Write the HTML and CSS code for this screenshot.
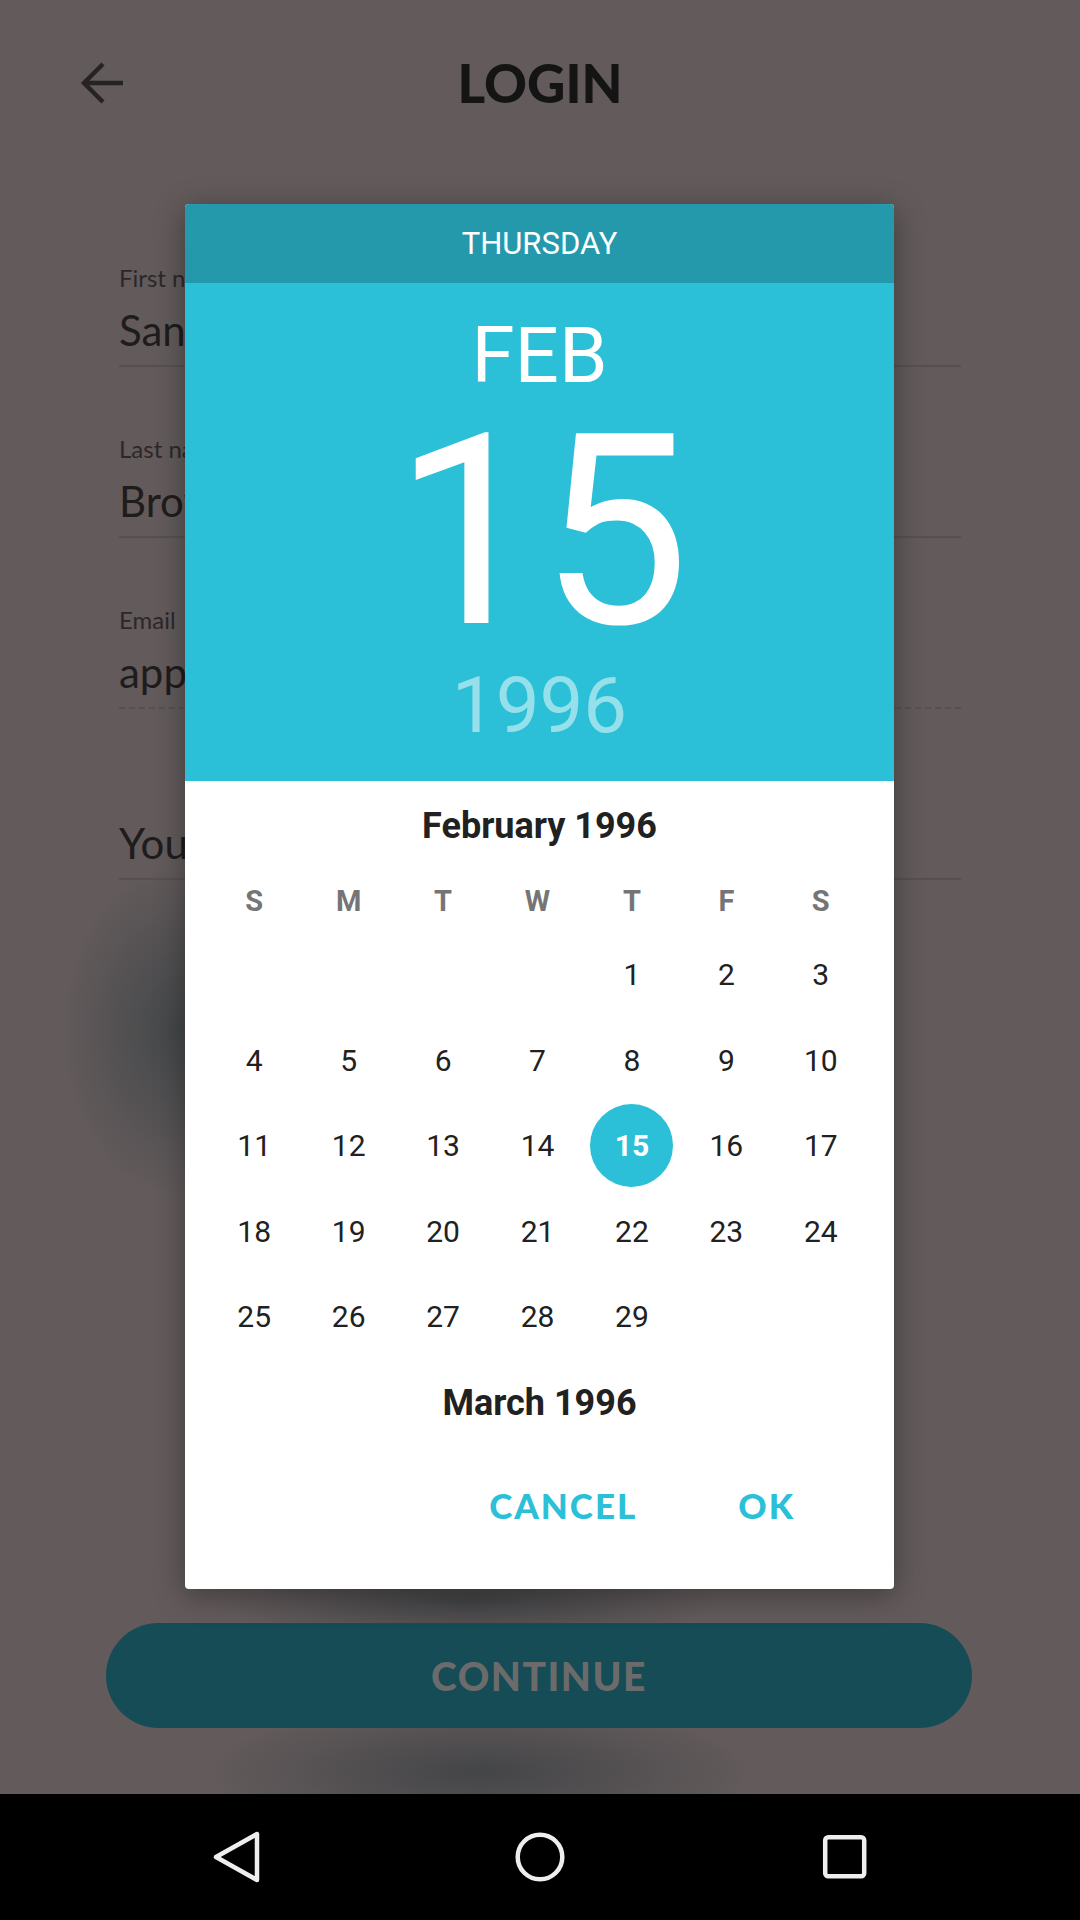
FILE: index.html
```html
<!DOCTYPE html>
<html lang="en">
<head>
<meta charset="utf-8">
<title>Login - Date picker</title>
<link rel="stylesheet" href="styles.css">
</head>
<body>
<div class="phone">
  <div class="screen">
    <header class="topbar">
      <div class="back">
        <svg width="48" height="48" viewBox="0 0 48 48" fill="none" stroke="#262323" stroke-width="4.4" stroke-linecap="butt" stroke-linejoin="miter">
          <path d="M5 24 H44"/>
          <path d="M24 5 L5 24 L24 43"/>
        </svg>
      </div>
      <h1 class="title">LOGIN</h1>
      <div class="spacer"></div>
    </header>

    <form class="form">
      <div class="field">
        <div class="label">First name</div>
        <div class="value">Sandra</div>
      </div>
      <div class="field">
        <div class="label">Last name</div>
        <div class="value">Brown</div>
      </div>
      <div class="field dashed">
        <div class="label">Email</div>
        <div class="value">app@me.io</div>
      </div>
      <div class="field">
        <div class="label hidden">Birthday</div>
        <div class="value">Your birthday</div>
      </div>
    </form>

    <div class="continue">CONTINUE</div>
  </div>

  <nav class="navbar">
    <svg class="nav-icon" width="60" height="60" viewBox="0 0 60 60" fill="none" stroke="#eeeeee" stroke-width="4.5" stroke-linejoin="round">
      <path d="M10 30 L51 7 L51 53 Z"/>
    </svg>
    <svg class="nav-icon" width="60" height="60" viewBox="0 0 60 60" fill="none" stroke="#eeeeee" stroke-width="4.5">
      <circle cx="30" cy="30" r="22.3"/>
    </svg>
    <svg class="nav-icon" width="60" height="60" viewBox="0 0 60 60" fill="none" stroke="#eeeeee" stroke-width="4.5">
      <rect x="11.2" y="10.2" width="39" height="39" rx="3"/>
    </svg>
  </nav>

  <div class="dialog">
    <div class="dlg-weekday">THURSDAY</div>
    <div class="dlg-date">
      <div class="dlg-month">FEB</div>
      <div class="dlg-day">15</div>
      <div class="dlg-year">1996</div>
    </div>
    <div class="dlg-body">
      <div class="month-title">February 1996</div>
      <div class="cal">
        <div class="wd">S</div><div class="wd">M</div><div class="wd">T</div><div class="wd">W</div><div class="wd">T</div><div class="wd">F</div><div class="wd">S</div>
      </div>
      <div class="cal days">
        <div class="d"></div><div class="d"></div><div class="d"></div><div class="d"></div><div class="d">1</div><div class="d">2</div><div class="d">3</div>
        <div class="d">4</div><div class="d">5</div><div class="d">6</div><div class="d">7</div><div class="d">8</div><div class="d">9</div><div class="d">10</div>
        <div class="d">11</div><div class="d">12</div><div class="d">13</div><div class="d">14</div><div class="d"><span class="sel">15</span></div><div class="d">16</div><div class="d">17</div>
        <div class="d">18</div><div class="d">19</div><div class="d">20</div><div class="d">21</div><div class="d">22</div><div class="d">23</div><div class="d">24</div>
        <div class="d">25</div><div class="d">26</div><div class="d">27</div><div class="d">28</div><div class="d">29</div><div class="d"></div><div class="d"></div>
      </div>
      <div class="month-title next">March 1996</div>
      <div class="actions">
        <span class="btn">CANCEL</span>
        <span class="btn">OK</span>
      </div>
    </div>
  </div>
</div>
</body>
</html>
```

FILE: styles.css
```css
* { box-sizing: border-box; }

html, body {
  margin: 0;
  padding: 0;
}

body {
  width: 1080px;
  height: 1920px;
  overflow: hidden;
  font-family: Roboto, "Liberation Sans", sans-serif;
}

.phone {
  position: relative;
  width: 1080px;
  height: 1920px;
  display: flex;
  flex-direction: column;
}

.screen {
  height: 1794px;
  display: flex;
  flex-direction: column;
  background-color: #625a5b;
  background-image:
    radial-gradient(ellipse 115px 165px at 178px 1030px, rgba(66, 70, 72, 0.95), rgba(66, 70, 72, 0) 100%),
    radial-gradient(ellipse 250px 45px at 470px 1600px, rgba(64, 66, 68, 0.95), rgba(64, 66, 68, 0) 100%),
    radial-gradient(ellipse 270px 70px at 480px 1772px, rgba(66, 68, 70, 0.95), rgba(66, 68, 70, 0) 100%);
}

/* top bar */
.topbar {
  height: 166px;
  display: grid;
  grid-template-columns: 200px 1fr 200px;
  align-items: center;
}

.back {
  padding-left: 79px;
  display: flex;
  align-items: center;
}

.title {
  margin: 0;
  text-align: center;
  font-family: Lato, "Open Sans", sans-serif;
  font-weight: 900;
  font-size: 53px;
  line-height: 60px;
  color: #151414;
}

/* form */
.form {
  margin: 97px 0 0;
  padding: 0 119px;
  display: flex;
  flex-direction: column;
  gap: 67px;
}

.field {
  display: flex;
  flex-direction: column;
  align-items: flex-start;
  border-bottom: 2px solid #575050;
  padding-bottom: 9px;
}

.field.dashed {
  border-bottom: 2px dashed #575050;
}

.label {
  font-family: Lato, "Open Sans", sans-serif;
  font-size: 24px;
  line-height: 30px;
  color: #2c2828;
}

.label.hidden { visibility: hidden; }

.value {
  margin-top: 11px;
  font-family: Lato, "Open Sans", sans-serif;
  font-size: 42px;
  line-height: 52px;
  color: #1f1c1c;
  white-space: nowrap;
}

/* continue button */
.continue {
  margin: auto 108px 66px 106px;
  height: 105px;
  border-radius: 53px;
  background: #154c56;
  display: flex;
  align-items: center;
  justify-content: center;
  font-family: Lato, "Open Sans", sans-serif;
  font-weight: 900;
  font-size: 39px;
  letter-spacing: 1.5px;
  color: #6c6b6b;
}

/* nav bar */
.navbar {
  height: 126px;
  background: #000;
  display: flex;
  align-items: center;
  justify-content: center;
  gap: 244px;
}

.nav-icon { display: block; }

/* dialog */
.dialog {
  position: absolute;
  left: 185px;
  top: 204px;
  width: 709px;
  height: 1385px;
  border-radius: 4px;
  overflow: hidden;
  background: #fff;
  box-shadow: 0 6px 30px rgba(0, 0, 0, 0.35);
  display: flex;
  flex-direction: column;
}

.dlg-weekday {
  height: 79px;
  background: #2399ab;
  color: #fff;
  font-size: 31px;
  line-height: 79px;
  text-align: center;
}

.dlg-date {
  height: 498px;
  background: #2bc0d7;
  color: #fff;
  display: flex;
  flex-direction: column;
  align-items: center;
  padding-top: 31px;
}

.dlg-month {
  font-size: 78px;
  line-height: 84px;
}

.dlg-day {
  margin-top: 4px;
  font-size: 267px;
  line-height: 260px;
  letter-spacing: -4px;
}

.dlg-year {
  margin-top: 2px;
  font-size: 78px;
  line-height: 84px;
  color: rgba(255, 255, 255, 0.5);
}

.dlg-body {
  flex: 1;
  padding: 23px 0 0;
  display: flex;
  flex-direction: column;
}

.month-title {
  text-align: center;
  font-weight: 700;
  font-size: 36px;
  line-height: 44px;
  color: #212121;
}

.month-title.next {
  margin-top: 21px;
}

.cal {
  display: grid;
  grid-template-columns: repeat(7, 1fr);
  padding: 0 26px 0 22px;
}

.wd {
  margin-top: 22px;
  height: 62px;
  display: flex;
  align-items: center;
  justify-content: center;
  font-weight: 700;
  font-size: 29px;
  color: #757575;
}

.days {
  grid-auto-rows: 85.5px;
}

.d {
  display: flex;
  align-items: center;
  justify-content: center;
  font-size: 30px;
  color: #212121;
}

.sel {
  width: 83px;
  height: 83px;
  border-radius: 50%;
  background: #2bc0d7;
  color: #fff;
  font-weight: 700;
  display: flex;
  align-items: center;
  justify-content: center;
}

.actions {
  margin-top: 50px;
  display: flex;
  justify-content: flex-end;
  gap: 101px;
  padding-right: 99px;
}

.btn {
  font-family: Lato, "Open Sans", sans-serif;
  font-weight: 900;
  font-size: 35px;
  line-height: 60px;
  letter-spacing: 2px;
  color: #2bc0d7;
}
```
